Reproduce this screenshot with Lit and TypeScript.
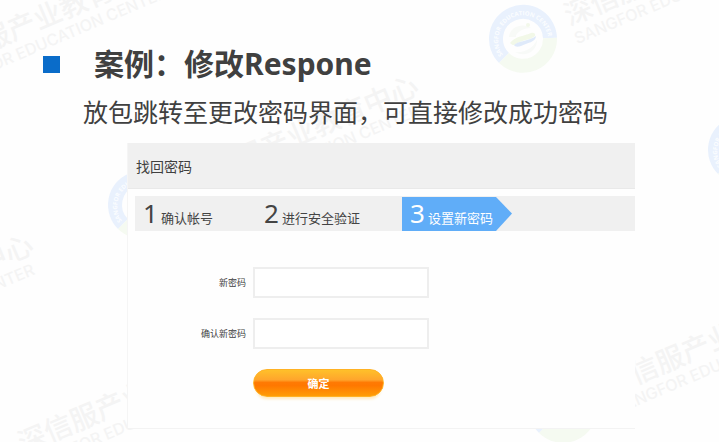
import { LitElement, html, svg, css } from "lit";
import { customElement, property } from "lit/decorators.js";

@customElement("brand-watermark")
class BrandWatermark extends LitElement {
  static styles = css`
    :host {
      display: block;
      position: absolute;
      inset: 0;
      overflow: hidden;
      pointer-events: none;
    }
    .canvas {
      display: block;
      width: 100%;
      height: 100%;
      overflow: visible;
    }
    .cn {
      font: 500 28px "Noto Sans CJK SC", sans-serif;
      fill: #f4f4f4;
    }
    .en {
      font: 500 16px Inter, "Noto Sans", sans-serif;
      fill: #f4f4f4;
    }
    .ring {
      font: 700 6px "Open Sans", "Noto Sans", sans-serif;
      fill: #fbfdff;
    }
  `;

  // Centre of each emblem on the free canvas.
  private marks = [
    [523, 39],
    [142, 205],
    [742, 150],
    [563, 409],
    [-111, 87],
    [-243, 364],
    [-23, 467],
  ];

  private mark([x, y]: number[], i: number) {
    return svg`<g transform="translate(${x} ${y})">
      <path d="M-19 19A27 27 0 1 1 27 -1" fill="none" stroke="#e9f1fd" stroke-width="14"/>
      <path d="M27 -1A27 27 0 0 1 -19 19" fill="none" stroke="#f5faf1" stroke-width="14"/>
      <path id="arc${i}" d="M-20 16A25 25 0 1 1 25 -2" fill="none"/>
      <text class="ring"><textPath href="#arc${i}">SANGFOR EDUCATION CENTER</textPath></text>
      <path d="M-14 -2C-13 -14 2 -16 8 -11C0 -11 -8 -6 -7 -2Z" fill="#f8faf7"/>
      <circle cx="5" cy="-14" r="2" fill="#f3f8ea"/>
      <path d="M-13 4C-8 -3 2 -3 8 -6C11 -7 13 -5 12 -3C8 1 -2 1 -7 5C-9 7 -11 6 -13 4Z" fill="#f2f8e8"/>
      <path d="M-9 6C-5 2 6 2 13 -3C13 3 4 4 -2 7C-5 8 -8 8 -9 6Z" fill="#dfeafa"/>
      <path d="M-8 13C2 14 10 9 14 1C14 12 3 19 -8 13Z" fill="#f8faf8"/>
      <g transform="rotate(-23)">
        <text class="cn" x="48" y="6">深信服产业教育中心</text>
        <text class="en" x="48" y="26">SANGFOR EDUCATION CENTER</text>
      </g>
    </g>`;
  }

  render() {
    return html`<svg class="canvas" aria-hidden="true">
      ${this.marks.map((m, i) => this.mark(m, i))}
    </svg>`;
  }
}

@customElement("step-bar")
class StepBar extends LitElement {
  @property({ type: Array }) steps: string[] = [];
  @property({ type: Number }) current = 0;

  static styles = css`
    :host {
      display: block;
    }
    .steps {
      display: grid;
      grid-template-columns: 121px 146px 110px;
      grid-template-rows: 35px;
      margin: 0;
      padding: 0;
      list-style: none;
      background: #f0f0f0;
      color: #444;
    }
    .step {
      display: flex;
      align-items: baseline;
      gap: 3px;
      padding-left: 8px;
      white-space: nowrap;
      line-height: 34px;
    }
    .on {
      background: #60adf8;
      color: #fff;
      clip-path: polygon(0 1px, 94px 1px, 100% 50%, 94px 100%, 0 100%);
    }
    .num {
      font-size: 26px;
    }
    .label {
      font-size: 13px;
    }
  `;

  render() {
    return html`<ol class="steps">
      ${this.steps.map(
        (s, i) => html`<li class="step ${i === this.current ? "on" : ""}">
          <span class="num">${i + 1}</span><span class="label">${s}</span>
        </li>`
      )}
    </ol>`;
  }
}

@customElement("app-root")
class AppRoot extends LitElement {
  static styles = css`
    :host {
      display: block;
      position: relative;
      box-sizing: border-box;
      min-height: 100vh;
      overflow: hidden;
      padding: 44px 84px 12px 127px;
      background: #fefefe;
      color: #404040;
      font-family: "Noto Sans", "Noto Sans CJK SC", sans-serif;
    }
    .head,
    .panel {
      position: relative;
    }
    .head {
      margin: 0 -84px;
      white-space: nowrap;
    }
    .title {
      display: flex;
      align-items: center;
      gap: 34px;
      margin: 0;
      font-size: 30px;
      line-height: 40px;
      font-weight: 700;
    }
    .bullet {
      width: 17px;
      height: 17px;
      background: #0a6cc9;
    }
    .sub {
      margin: 8px 0 0 40px;
      font-size: 25px;
      line-height: 40px;
    }
    .panel {
      margin-top: 11px;
      box-sizing: border-box;
      padding-bottom: 31px;
      background: #fefefe;
      border-left: 1px solid #f5f5f5;
      border-bottom: 1px solid #f3f3f3;
    }
    .bar {
      margin: 0;
      padding: 2px 8px 0;
      height: 43px;
      line-height: 44px;
      border-bottom: 1px solid #e9e9e9;
      background: #f0f0f0;
      font-size: 14px;
      font-weight: 400;
    }
    .track {
      margin: 7px 0 0 7px;
    }
    .form {
      display: grid;
      grid-template-columns: 118px 176px;
      gap: 20px 7px;
      margin-top: 36px;
      align-items: center;
    }
    .name {
      font-size: 9px;
      text-align: right;
    }
    .field {
      box-sizing: border-box;
      width: 100%;
      height: 31px;
      padding: 0 8px;
      border: 2px solid #eee;
      background: #fff;
      font: inherit;
      font-size: 12px;
    }
    .ok {
      grid-column: 2;
      width: 131px;
      height: 28px;
      padding: 0;
      border: 1px solid #ffb224;
      border-radius: 14px;
      background: linear-gradient(#ffc02a, #ffa52c 38%, #ff7a04 48%, #ff7800 60%, #ff9d05);
      box-shadow: 0 5px 3px -3px #ffe9bb;
      color: #fff;
      font: inherit;
      font-size: 11px;
      font-weight: 700;
    }
  `;

  render() {
    return html`
      <brand-watermark></brand-watermark>
      <header class="head">
        <h1 class="title"><span class="bullet"></span>案例：修改Respone</h1>
        <p class="sub">放包跳转至更改密码界面，可直接修改成功密码</p>
      </header>
      <section class="panel">
        <h2 class="bar">找回密码</h2>
        <step-bar class="track" .steps=${["确认帐号", "进行安全验证", "设置新密码"]} .current=${2}></step-bar>
        <form class="form" @submit=${(e: Event) => e.preventDefault()}>
          <label class="name" for="pw">新密码</label>
          <input class="field" id="pw" type="password" />
          <label class="name" for="pw2">确认新密码</label>
          <input class="field" id="pw2" type="password" />
          <button class="ok" type="submit">确定</button>
        </form>
      </section>
    `;
  }
}
